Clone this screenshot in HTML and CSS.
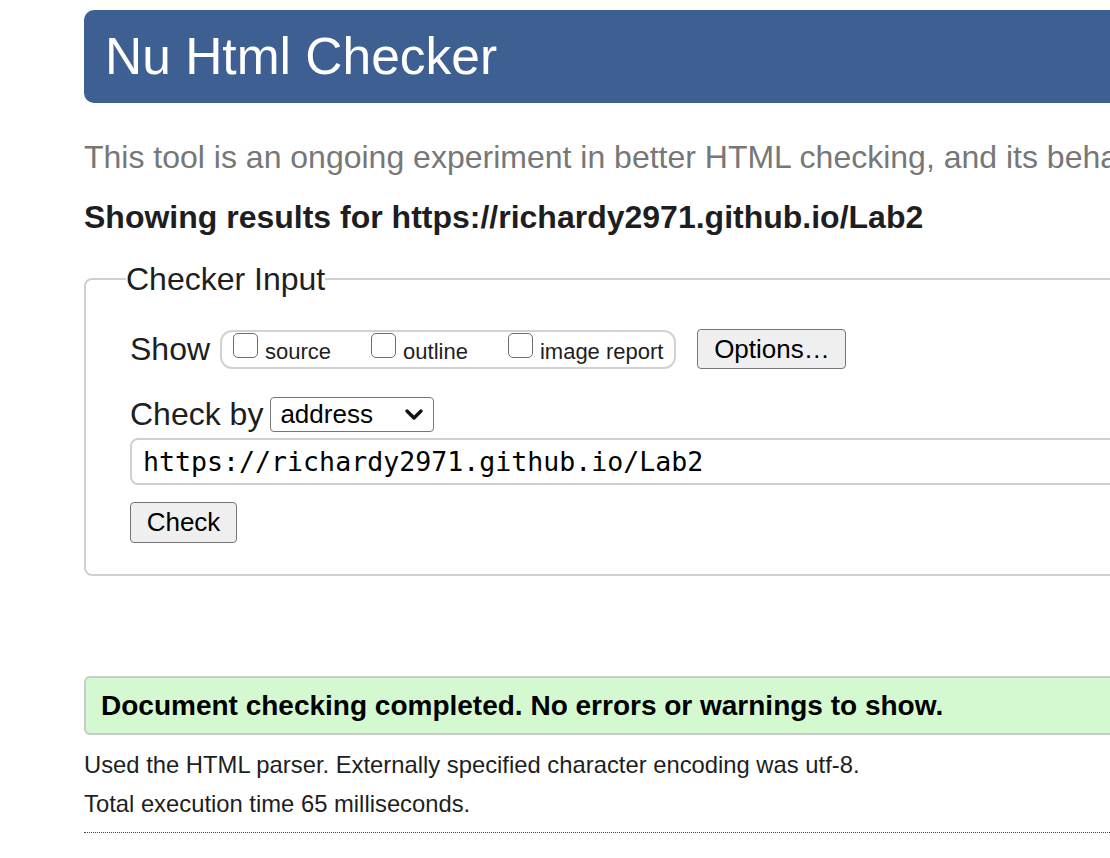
FILE: index.html
```html
<!DOCTYPE html>
<html lang="en">
<head>
<meta charset="utf-8">
<title>Nu Html Checker</title>
<link rel="stylesheet" href="styles.css">
</head>
<body>
<div class="page">
  <h1 class="banner">Nu Html Checker</h1>
  <p class="intro">This tool is an ongoing experiment in better HTML checking, and its behavior remains subject to change</p>
  <h2 class="showing">Showing results for https://richardy2971.github.io/Lab2</h2>

  <fieldset class="checker">
    <legend class="checker-legend">Checker Input</legend>
    <div class="row row-show">
      <span class="row-label">Show</span>
      <div class="show-group">
        <label class="opt"><input type="checkbox" class="cb"><span>source</span></label>
        <label class="opt"><input type="checkbox" class="cb"><span>outline</span></label>
        <label class="opt"><input type="checkbox" class="cb"><span>image report</span></label>
      </div>
      <button class="btn btn-options" type="button">Options…</button>
    </div>
    <div class="row row-by">
      <span class="row-label">Check by</span>
      <div class="select-wrap">
        <select class="select"><option>address</option></select>
        <svg class="chev" width="20" height="14" viewBox="0 0 20 14"><path d="M3 3 L10 10 L17 3" fill="none" stroke="#111" stroke-width="3.4" stroke-linecap="round" stroke-linejoin="round"/></svg>
      </div>
    </div>
    <div class="url">https://richardy2971.github.io/Lab2</div>
    <button class="btn btn-check" type="button">Check</button>
  </fieldset>

  <div class="success">Document checking completed. No errors or warnings to show.</div>
  <p class="meta">Used the HTML parser. Externally specified character encoding was utf-8.</p>
  <p class="meta">Total execution time 65 milliseconds.</p>
  <div class="dotted"></div>
</div>
</body>
</html>
```

FILE: styles.css
```css
html, body {
  margin: 0;
  padding: 0;
  overflow: hidden;
  background: #ffffff;
}

body {
  font-family: "Liberation Sans", Arial, Helvetica, sans-serif;
  color: #1e1e1e;
}

.page {
  margin-left: 84px;
  width: 1400px;
  padding-top: 10px;
}

.banner {
  margin: 0;
  height: 93px;
  box-sizing: border-box;
  background: #3e5f92;
  border-radius: 10px;
  padding-left: 21px;
  color: #ffffff;
  font-size: 51.5px;
  font-weight: normal;
  line-height: 93px;
}

.intro {
  margin: 36px 0 0 0;
  font-size: 32px;
  line-height: 36px;
  color: #777777;
  white-space: nowrap;
}

.showing {
  margin: 24px 0 0 0;
  font-size: 32px;
  line-height: 36px;
  font-weight: bold;
  color: #1e1e22;
  white-space: nowrap;
}

.checker {
  margin: 26px 0 0 0;
  border: 2px solid #d0d0d0;
  border-radius: 8px;
  padding: 0 0 31px 44px;
  min-width: 0;
}

.checker-legend {
  font-size: 32px;
  line-height: 36px;
  padding: 0;
  margin-left: -4px;
  color: #1e1e1e;
}

.row {
  display: flex;
  align-items: center;
}

.row-show {
  margin-top: 32px;
  height: 40px;
}

.row-label {
  font-size: 32px;
  line-height: 36px;
  color: #1e1e1e;
}

.show-group {
  margin-left: 10px;
  height: 39px;
  box-sizing: border-box;
  border: 2px solid #d2d2d2;
  border-radius: 12px;
  padding: 0 11px 0 11px;
  display: flex;
  align-items: center;
  gap: 40px;
}

.opt {
  display: flex;
  align-items: flex-end;
  font-size: 22px;
  line-height: 26px;
  color: #1e1e1e;
}

.opt span {
  margin-left: 7px;
  position: relative;
  top: 3px;
}

.cb {
  -webkit-appearance: none;
  appearance: none;
  margin: 0;
  width: 25px;
  height: 25px;
  box-sizing: border-box;
  border: 1.5px solid #6e6e6e;
  border-radius: 5px;
  background: #ffffff;
  position: relative;
  top: -4px;
}

.btn {
  font-family: "Liberation Sans", Arial, Helvetica, sans-serif;
  background: #efefef;
  border: 1.5px solid #767676;
  border-radius: 4px;
  color: #000000;
  box-sizing: border-box;
  padding: 0;
  display: flex;
  align-items: center;
  justify-content: center;
}

.btn-options {
  margin-left: 21px;
  width: 149px;
  height: 40px;
  font-size: 26px;
}

.row-by {
  margin-top: 27px;
  height: 36px;
}

.select-wrap {
  position: relative;
  margin-left: 7px;
  width: 164px;
  height: 35px;
}

.select {
  -webkit-appearance: none;
  appearance: none;
  width: 164px;
  height: 35px;
  box-sizing: border-box;
  border: 1.5px solid #767676;
  border-radius: 4px;
  background: #ffffff;
  font-family: "Liberation Sans", Arial, Helvetica, sans-serif;
  font-size: 26px;
  color: #000000;
  padding: 0 0 0 9px;
  margin: 0;
}

.chev {
  position: absolute;
  right: 10px;
  top: 11px;
  pointer-events: none;
}

.url {
  margin-top: 6px;
  width: 1300px;
  height: 47px;
  box-sizing: border-box;
  border: 2px solid #d0d0d0;
  border-radius: 8px;
  padding-left: 11px;
  font-family: "DejaVu Sans Mono", "Liberation Mono", monospace;
  font-size: 26.6px;
  line-height: 43px;
  color: #000000;
}

.btn-check {
  margin-top: 17px;
  width: 107px;
  height: 41px;
  font-size: 26px;
}

.success {
  margin-top: 100px;
  height: 59px;
  box-sizing: border-box;
  border: 2px solid #cacaca;
  border-radius: 6px;
  background: #d4f8cf;
  padding-left: 15px;
  font-size: 28px;
  font-weight: bold;
  line-height: 55px;
  color: #000000;
  white-space: nowrap;
}

.meta {
  margin: 0;
  font-size: 23.8px;
  line-height: 39px;
  color: #1e1e1e;
}

.success + .meta {
  margin-top: 10px;
}

.dotted {
  margin-top: 9px;
  border-top: 1px dotted #444444;
  width: 1400px;
}
```
